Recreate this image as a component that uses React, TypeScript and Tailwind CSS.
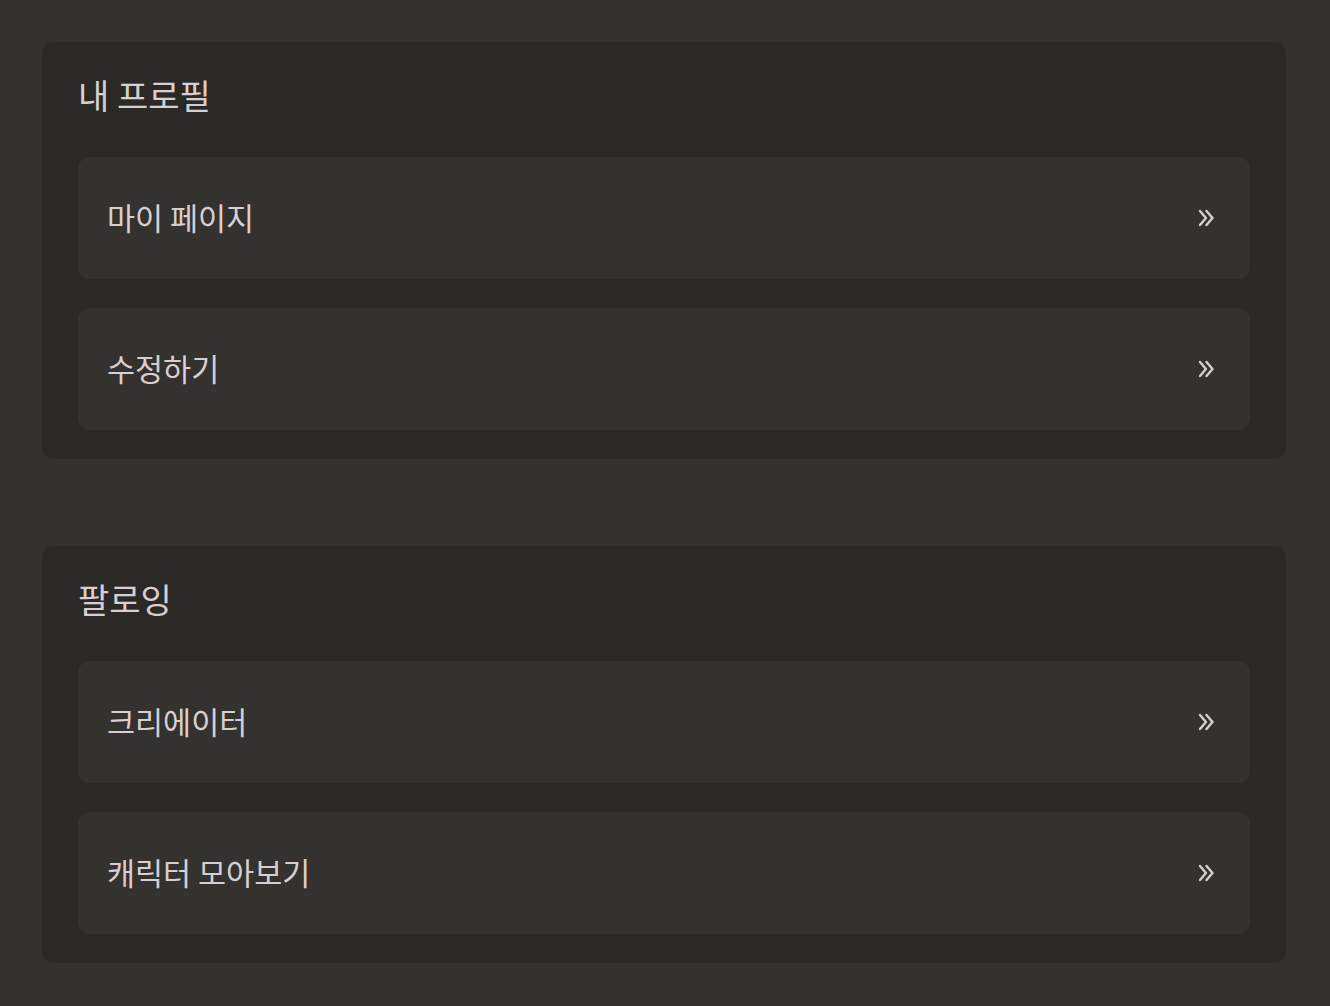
const menu = [
  { title: "내 프로필", items: ["마이 페이지", "수정하기"] },
  { title: "팔로잉", items: ["크리에이터", "캐릭터 모아보기"] },
];

const ChevronsIcon = () => (
  <svg width="16" height="18" viewBox="0 0 16 18" fill="none" stroke="currentColor" strokeWidth="2.4" strokeLinecap="round" strokeLinejoin="round">
    <path d="M2 2l6 7-6 7" />
    <path d="M8.5 2l6 7-6 7" />
  </svg>
);

const App = () => {
  return (
    <div
      className="min-h-screen bg-[#33322e] pl-[42px] pr-[44px] pt-[42px] pb-[43px] flex flex-col gap-[87px] text-[#d8cfd2]"
      style={{ fontFamily: '"Noto Sans CJK KR", "Noto Sans", sans-serif' }}
    >
      {menu.map((section) => (
        <section key={section.title} className="bg-[#2a2926] rounded-xl px-9 pt-[33px] pb-[29px]">
          <h2 className="text-[34px] leading-[40px] font-normal mb-[42px]">{section.title}</h2>
          <div className="flex flex-col gap-[29px]">
            {section.items.map((item) => (
              <button
                key={item}
                className="h-[122px] bg-[#33322e] rounded-xl pl-[29px] pr-[36px] flex items-center justify-between text-left"
              >
                <span className="text-[30.5px] leading-none -translate-y-px">{item}</span>
                <ChevronsIcon />
              </button>
            ))}
          </div>
        </section>
      ))}
    </div>
  );
};

export default App;
